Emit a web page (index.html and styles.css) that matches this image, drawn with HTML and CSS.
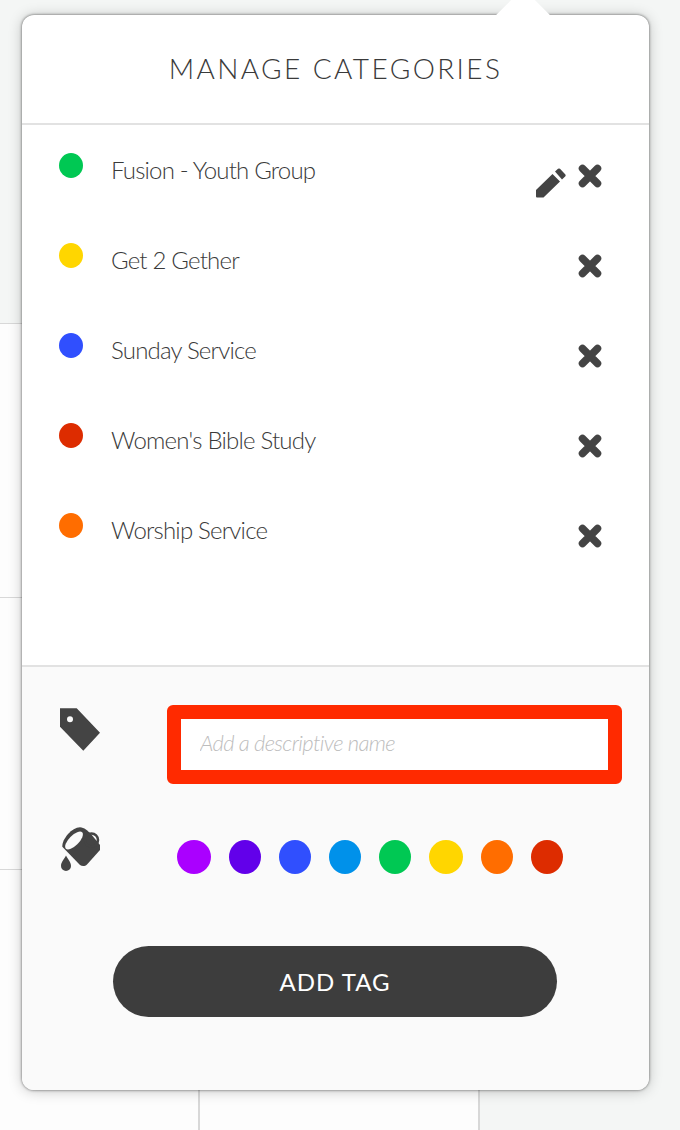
FILE: index.html
```html
<!DOCTYPE html>
<html lang="en">
  <head>
    <meta charset="UTF-8" />
    <meta name="viewport" content="width=device-width, initial-scale=1.0" />
    <title>Manage Categories</title>
    <link rel="stylesheet" href="styles.css">
  </head>
  <body>
    <!-- calendar cells behind the popover -->
    <div class="calendar">
      <div class="cell"></div><div class="cell"></div>
      <div class="cell"></div><div class="cell"></div>
      <div class="cell"></div><div class="cell"></div>
    </div>

    <div class="popover">
      <div class="arrow"></div>
      <h1 class="title">MANAGE CATEGORIES</h1>

      <ul class="categories">
        <li class="category">
          <span class="dot green"></span>
          <span class="name">Fusion - Youth Group</span>
          <span class="actions">
            <svg class="pencil" viewBox="0 0 30 30"><path d="M0 22 L16.5 6 L24 13.5 L7.5 29.5 L1 29.5 Q0 29.5 0 28.5Z M19 3.5 L22 .8 Q23 0 24 .8 L29.4 6.5 Q30 7.5 29.4 8.2 L26 11.5Z"/></svg>
            <svg class="remove" viewBox="0 0 24 24"><path d="M4.5 4.5 L19.5 19.5 M19.5 4.5 L4.5 19.5"/></svg>
          </span>
        </li>
        <li class="category">
          <span class="dot yellow"></span>
          <span class="name">Get 2 Gether</span>
          <span class="actions">
            <svg class="remove" viewBox="0 0 24 24"><path d="M4.5 4.5 L19.5 19.5 M19.5 4.5 L4.5 19.5"/></svg>
          </span>
        </li>
        <li class="category">
          <span class="dot blue"></span>
          <span class="name">Sunday Service</span>
          <span class="actions">
            <svg class="remove" viewBox="0 0 24 24"><path d="M4.5 4.5 L19.5 19.5 M19.5 4.5 L4.5 19.5"/></svg>
          </span>
        </li>
        <li class="category">
          <span class="dot red"></span>
          <span class="name">Women's Bible Study</span>
          <span class="actions">
            <svg class="remove" viewBox="0 0 24 24"><path d="M4.5 4.5 L19.5 19.5 M19.5 4.5 L4.5 19.5"/></svg>
          </span>
        </li>
        <li class="category">
          <span class="dot orange"></span>
          <span class="name">Worship Service</span>
          <span class="actions">
            <svg class="remove" viewBox="0 0 24 24"><path d="M4.5 4.5 L19.5 19.5 M19.5 4.5 L4.5 19.5"/></svg>
          </span>
        </li>
      </ul>

      <div class="new-tag">
        <div class="field-row">
          <svg class="tag-icon" viewBox="0 0 40 43">
            <path fill-rule="evenodd" d="M0 .3 L16.7 .3 L40 24.7 L23.3 42.7 L0 18.7Z M10 8.3 A3 3 0 1 0 10 14.3 A3 3 0 1 0 10 8.3Z"/>
          </svg>
          <input class="tag-name" type="text" placeholder="Add a descriptive name" />
        </div>

        <div class="color-row">
          <svg class="paint-icon" viewBox="0 0 40 46">
            <path d="M2.3 19.7 C2 12 12 .3 20 .3 C24 .3 28 4 31 7 L40 18 L40 23 L27 37.5 C25 39.5 22 39.5 20 38Z"/>
            <ellipse cx="14" cy="13.5" rx="11.5" ry="5" transform="rotate(-45 14 13.5)" fill="#fafafa"/>
            <circle class="handle" cx="31.5" cy="13" r="6.5"/>
            <path d="M6 28.5 C8 32.5 11 35 11 39 A5 5 0 0 1 1 39 C1 35 4 32.5 6 28.5Z"/>
          </svg>
          <div class="swatches">
            <span class="swatch wide purple"></span>
            <span class="swatch violet"></span>
            <span class="swatch blue"></span>
            <span class="swatch sky"></span>
            <span class="swatch green"></span>
            <span class="swatch wide yellow"></span>
            <span class="swatch orange"></span>
            <span class="swatch red"></span>
          </div>
        </div>

        <button class="add-tag">ADD TAG</button>
      </div>
    </div>
  </body>
</html>
```

FILE: styles.css
```css
html,
body {
  height: 1130px;
}
body {
  margin: 0;
  overflow: hidden;
  background-color: #f4f6f5;
  font-family: "Lato", "Liberation Sans", sans-serif;
  color: #3a3a3a;
  position: relative;
}
.calendar {
  position: absolute;
  top: 323px;
  left: 0;
  display: grid;
  grid-template-columns: 200px 280px;
  grid-template-rows: 274px 272px 261px;
}
.cell {
  background-color: #fdfdfd;
  border-top: 1px solid #d8d8d8;
  border-right: 2px solid #d8d8d8;
}
.popover {
  position: absolute;
  top: 15px;
  left: 22px;
  width: 627px;
  height: 1075px;
  display: flex;
  flex-direction: column;
  background-color: #fff;
  border-radius: 12px;
  box-shadow: 0 0 3px rgba(0, 0, 0, 0.6), 0 1px 14px rgba(0, 0, 0, 0.22);
}
.arrow {
  position: absolute;
  top: -19px;
  left: 482px;
  width: 38px;
  height: 38px;
  background-color: #fff;
  transform: rotate(45deg);
}
.title {
  position: relative;
  margin: 0;
  height: 108px;
  line-height: 107px;
  border-bottom: 2px solid #e2e2e2;
  text-align: center;
  font-size: 28px;
  font-weight: 300;
  letter-spacing: 2.4px;
  color: #3a3a3a;
}
.categories {
  list-style: none;
  margin: 0;
  padding: 28px 47px 0 37px;
  height: 540px;
  box-sizing: border-box;
}
.category {
  display: flex;
  align-items: flex-start;
  height: 90px;
}
.dot {
  width: 24px;
  height: 25px;
  border-radius: 50%;
  margin-right: 28px;
}
.name {
  font-size: 24px;
  font-weight: 300;
  line-height: 34px;
  letter-spacing: -0.8px;
}
.actions {
  margin-left: auto;
  margin-top: 11px;
  display: flex;
  align-items: flex-start;
  gap: 12px;
}
.pencil {
  width: 30px;
  height: 30px;
  margin-top: 4px;
  fill: #444;
}
.remove {
  width: 24px;
  height: 24px;
  fill: none;
  stroke: #444;
  stroke-width: 7.5;
  stroke-linecap: round;
}
.new-tag {
  flex: 1;
  background-color: #fafafa;
  border-top: 2px solid #e2e2e2;
  border-radius: 0 0 12px 12px;
  padding: 38px 27px 0 38px;
}
.field-row {
  display: flex;
  align-items: flex-start;
}
.tag-icon {
  width: 40px;
  height: 43px;
  margin-top: 3px;
  fill: #444;
}
.tag-name {
  width: 455px;
  height: 79px;
  box-sizing: border-box;
  margin-left: 67px;
  border: 14px solid #ff2a00;
  border-radius: 6px;
  outline: none;
  padding: 0 19px 4px;
  background-color: #fff;
  font-family: "Lato", "Liberation Sans", sans-serif;
  font-size: 22px;
  font-weight: 300;
  font-style: italic;
  letter-spacing: -0.65px;
}
.tag-name::placeholder {
  color: #bdbdbd;
  opacity: 1;
}
.color-row {
  display: flex;
  align-items: flex-start;
  margin-top: 43px;
}
.paint-icon {
  width: 40px;
  height: 46px;
  fill: #444;
}
.paint-icon .handle {
  fill: none;
  stroke: #444;
  stroke-width: 2.5;
}
.swatches {
  display: flex;
  gap: 18px;
  margin-left: 77px;
  margin-top: 13px;
}
.swatch {
  width: 32px;
  height: 34px;
  border-radius: 50%;
}
.swatch.wide {
  width: 34px;
}
.add-tag {
  display: block;
  width: 444px;
  height: 71px;
  margin: 72px 0 0 53px;
  border: none;
  border-radius: 36px;
  background-color: #3d3d3d;
  color: #fff;
  font-family: "Lato", "Liberation Sans", sans-serif;
  font-size: 24px;
  font-weight: 400;
  letter-spacing: 1px;
}
.purple { background-color: #aa00ff; }
.violet { background-color: #6200ea; }
.blue { background-color: #304ffe; }
.sky { background-color: #0091ea; }
.green { background-color: #00c853; }
.yellow { background-color: #ffd600; }
.orange { background-color: #ff6d00; }
.red { background-color: #dd2c00; }
```
